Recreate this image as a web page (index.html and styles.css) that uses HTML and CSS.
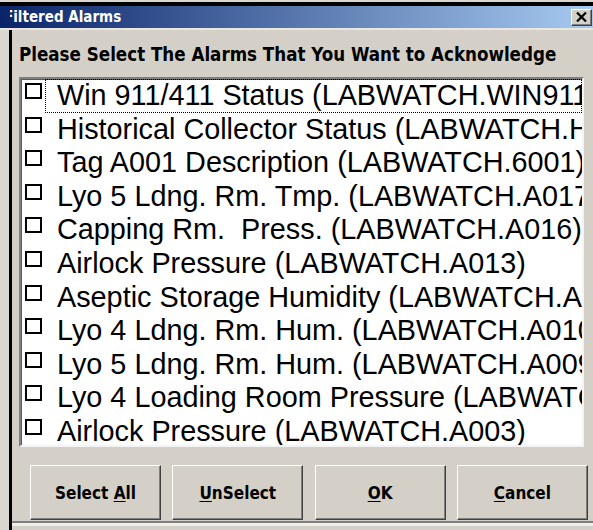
FILE: index.html
```html
<!DOCTYPE html>
<html lang="en">
<head>
<meta charset="utf-8">
<title>Filtered Alarms</title>
<link rel="stylesheet" href="styles.css">
</head>
<body>
  <div class="titlebar">
    <div class="title-clip"><span class="title">Filtered Alarms</span></div>
    <button class="close" type="button" aria-label="Close">
      <svg width="11" height="10" viewBox="0 0 11 10"><path d="M1 0.5 L10 9.5 M10 0.5 L1 9.5" stroke="#000" stroke-width="2.2" fill="none"/></svg>
    </button>
  </div>
  <div class="window">
    <div class="header">Please Select The Alarms That You Want to Acknowledge</div>
    <div class="list">
      <div class="row focus"><span class="box"></span><span class="label">Win 911/411 Status (LABWATCH.WIN911)</span></div>
      <div class="row"><span class="box"></span><span class="label">Historical Collector Status (LABWATCH.HIST)</span></div>
      <div class="row"><span class="box"></span><span class="label">Tag A001 Description (LABWATCH.6001)</span></div>
      <div class="row"><span class="box"></span><span class="label">Lyo 5 Ldng. Rm. Tmp. (LABWATCH.A017)</span></div>
      <div class="row"><span class="box"></span><span class="label">Capping Rm.  Press. (LABWATCH.A016)</span></div>
      <div class="row"><span class="box"></span><span class="label">Airlock Pressure (LABWATCH.A013)</span></div>
      <div class="row"><span class="box"></span><span class="label">Aseptic Storage Humidity (LABWATCH.A011)</span></div>
      <div class="row"><span class="box"></span><span class="label">Lyo 4 Ldng. Rm. Hum. (LABWATCH.A010)</span></div>
      <div class="row"><span class="box"></span><span class="label">Lyo 5 Ldng. Rm. Hum. (LABWATCH.A009)</span></div>
      <div class="row"><span class="box"></span><span class="label">Lyo 4 Loading Room Pressure (LABWATCH.A005)</span></div>
      <div class="row"><span class="box"></span><span class="label">Airlock Pressure (LABWATCH.A003)</span></div>
    </div>
    <div class="buttons">
      <button class="btn" type="button"><span>Select <u>A</u>ll</span></button>
      <button class="btn" type="button"><span><u>U</u>nSelect</span></button>
      <button class="btn" type="button"><span><u>O</u>K</span></button>
      <button class="btn" type="button"><span><u>C</u>ancel</span></button>
    </div>
    <div class="footer"></div>
  </div>
</body>
</html>
```
FILE: styles.css
```css
html, body {
  margin: 0;
  padding: 0;
}

body {
  width: 593px;
  height: 530px;
  overflow: hidden;
  box-sizing: border-box;
  padding-top: 2px;
  background: #dad7d1;
  font-family: "DejaVu Sans Condensed", "DejaVu Sans", sans-serif;
  font-stretch: condensed;
  color: #000;
}

/* caption bar */
.titlebar {
  height: 22px;
  border-top: 4px solid #000;
  border-bottom: 2px solid #e9e7e2;
  background: linear-gradient(to right, #0a246a 0%, #a6caf0 100%);
  display: flex;
  align-items: center;
  padding: 0 1px 0 10px;
}

.title-clip {
  flex: 1;
  overflow: hidden;
  white-space: nowrap;
}

.title {
  display: inline-block;
  margin-left: -6px;
  color: #fff;
  font-weight: bold;
  font-size: 15px;
  line-height: 22px;
}

.close {
  width: 21px;
  height: 17px;
  box-sizing: border-box;
  padding: 0;
  margin: 0;
  background: #d4d0c8;
  border: 1px solid;
  border-color: #fff #404040 #404040 #fff;
  box-shadow: inset -1px -1px 0 #808080;
  display: flex;
  align-items: center;
  justify-content: center;
}

/* dialog body */
.window {
  margin-left: 9px;
  border-left: 3px solid #000;
  background: #d4d0c8;
  height: 500px;
  display: flex;
  flex-direction: column;
}

.header {
  padding: 15px 0 0 7px;
  height: 20px;
  line-height: 20px;
  font-size: 18.6px;
  font-weight: bold;
  white-space: nowrap;
}

.list {
  margin: 12px 9px 0 7px;
  height: 370px;
  box-sizing: border-box;
  border: 2px solid;
  border-color: #7f7f7f #f4f4f4 #f4f4f4 #7f7f7f;
  box-shadow: inset 1px 1px 0 #5a5a5a;
  background: #fff;
  overflow: hidden;
  flex: none;
}

.row {
  display: flex;
  align-items: flex-start;
  height: 33.6px;
}

.box {
  flex: none;
  width: 17px;
  height: 16px;
  box-sizing: border-box;
  border: 2px solid #000;
  margin: 4px 3px 0 4px;
}

.label {
  flex: 1;
  min-width: 0;
  height: 33.6px;
  padding-left: 12px;
  font-family: "Liberation Sans", Arial, sans-serif;
  font-stretch: normal;
  font-size: 28.8px;
  line-height: 33.6px;
  white-space: pre;
  overflow: hidden;
}

.focus .label {
  outline: 1px dotted #000;
  outline-offset: -1px;
}

/* command buttons */
.buttons {
  display: flex;
  gap: 11.3px;
  margin: 18px 0 0 18px;
  flex: none;
}

.btn {
  width: 131px;
  height: 55px;
  box-sizing: border-box;
  padding: 0;
  margin: 0;
  background: #d4d0c8;
  border: 1px solid;
  border-color: #fff #404040 #404040 #fff;
  box-shadow: inset -1px -1px 0 #808080;
  font-family: "DejaVu Sans Condensed", "DejaVu Sans", sans-serif;
  font-stretch: condensed;
  font-weight: bold;
  font-size: 17px;
  color: #000;
  display: flex;
  align-items: center;
  justify-content: center;
  white-space: pre;
}

.btn u {
  text-underline-offset: 2px;
}

.footer {
  flex: 1;
  margin-top: 1px;
  border-top: 2px solid #7e7e7e;
  box-shadow: inset 0 3px 0 #efeee9;
}
```
